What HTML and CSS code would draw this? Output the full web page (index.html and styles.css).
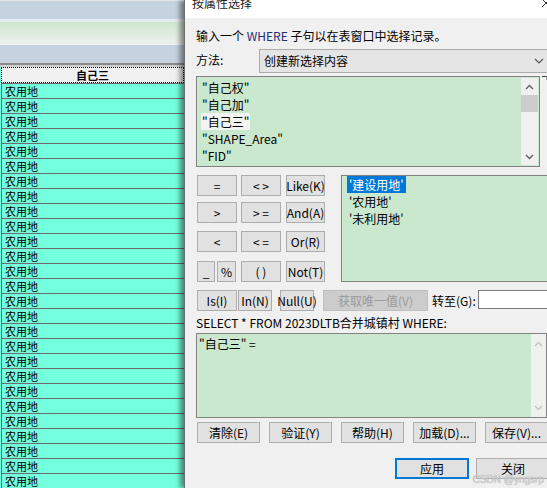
FILE: index.html
```html
<!DOCTYPE html>
<html lang="zh">
<head>
<meta charset="utf-8">
<title>按属性选择</title>
<link rel="stylesheet" href="styles.css">
</head>
<body>
<div class="screen">
  <div class="table-pane">
    <div class="band band-top"></div>
    <div class="band band-blue"></div>
    <div class="band band-light"></div>
    <div class="band band-green"></div>
    <div class="band band-blue"></div>
    <div class="sep"></div>
    <div class="col-header">自己三</div>
    <div class="rows">
      <div class="row">农用地</div><div class="row">农用地</div><div class="row">农用地</div>
      <div class="row">农用地</div><div class="row">农用地</div><div class="row">农用地</div>
      <div class="row">农用地</div><div class="row">农用地</div><div class="row">农用地</div>
      <div class="row">农用地</div><div class="row">农用地</div><div class="row">农用地</div>
      <div class="row">农用地</div><div class="row">农用地</div><div class="row">农用地</div>
      <div class="row">农用地</div><div class="row">农用地</div><div class="row">农用地</div>
      <div class="row">农用地</div><div class="row">农用地</div><div class="row">农用地</div>
      <div class="row">农用地</div><div class="row">农用地</div><div class="row">农用地</div>
      <div class="row">农用地</div><div class="row">农用地</div><div class="row">农用地</div>
    </div>
  </div>

  <div class="dialog">
    <div class="titlebar">
      <span class="title">按属性选择</span>
      <svg class="close" width="10" height="10" viewBox="0 0 10 10"><path d="M1 0 L9 8 M9 0 L1 8" stroke="#333" stroke-width="1" fill="none"/></svg>
    </div>
    <div class="body">
      <div class="intro">输入一个 <span class="blue">WHERE</span> 子句以在表窗口中选择记录。</div>
      <div class="method">
        <span class="method-label">方法:</span>
        <div class="combo">
          <span>创建新选择内容</span>
          <svg width="10" height="6" viewBox="0 0 10 6"><path d="M1 1 L5 5 L9 1" stroke="#555" stroke-width="1.2" fill="none"/></svg>
        </div>
      </div>

      <div class="fields-row">
        <div class="fields">
          <div class="fields-items">
            <div class="fitem">"自己权"</div>
            <div class="fitem">"自己加"</div>
            <div class="fitem sel">"自己三"</div>
            <div class="fitem">"SHAPE_Area"</div>
            <div class="fitem">"FID"</div>
          </div>
          <div class="vscroll">
            <div class="arrow"><svg width="9" height="6" viewBox="0 0 9 6"><path d="M1 5 L4.5 1.5 L8 5" stroke="#606060" stroke-width="1.4" fill="none"/></svg></div>
            <div class="thumb"></div>
            <div class="track"></div>
            <div class="arrow"><svg width="9" height="6" viewBox="0 0 9 6"><path d="M1 1 L4.5 4.5 L8 1" stroke="#606060" stroke-width="1.4" fill="none"/></svg></div>
          </div>
        </div>
        <div class="tick"></div>
      </div>

      <div class="ops-area">
        <div class="ops">
          <div class="ops-row r1">
            <div class="btn w40">=</div><div class="btn w40 g4">&lt; &gt;</div><div class="btn w39 g5">Like(K)</div>
          </div>
          <div class="ops-row r2">
            <div class="btn w40">&gt;</div><div class="btn w40 g4">&gt; =</div><div class="btn w39 g5">And(A)</div>
          </div>
          <div class="ops-row r3">
            <div class="btn w40">&lt;</div><div class="btn w40 g4">&lt; =</div><div class="btn w39 g5">Or(R)</div>
          </div>
          <div class="ops-row r4">
            <div class="btn w18">_</div><div class="btn w19 g2">%</div><div class="btn w40 g5">( )</div><div class="btn w39 g5">Not(T)</div>
          </div>
        </div>
        <div class="values">
          <div class="vitem"><span class="hl">'建设用地'</span></div>
          <div class="vitem">'农用地'</div>
          <div class="vitem">'未利用地'</div>
        </div>
      </div>

      <div class="tools">
        <div class="btn w40">Is(I)</div>
        <div class="btn w34 g1">In(N)</div>
        <div class="btn w34 g8">Null(U)</div>
        <div class="btn disabled g9">获取唯一值(V)</div>
        <span class="goto">转至(G):</span>
        <div class="goto-input"></div>
      </div>

      <div class="sql">SELECT * FROM 2023DLTB合并城镇村 WHERE:</div>

      <div class="expr">
        <div class="expr-text">"自己三" =</div>
        <div class="expr-scroll">
          <svg width="9" height="6" viewBox="0 0 9 6"><path d="M1 5 L4.5 1.5 L8 5" stroke="#c2c2c2" stroke-width="1.4" fill="none"/></svg>
          <svg width="9" height="6" viewBox="0 0 9 6"><path d="M1 1 L4.5 4.5 L8 1" stroke="#c2c2c2" stroke-width="1.4" fill="none"/></svg>
        </div>
      </div>

      <div class="bottom">
        <div class="btn w63">清除(E)</div>
        <div class="btn w63">验证(Y)</div>
        <div class="btn w63">帮助(H)</div>
        <div class="btn w63">加载(D)...</div>
        <div class="btn w63">保存(V)...</div>
      </div>

      <div class="actions">
        <div class="btn w74 default">应用</div>
        <div class="btn w74">关闭</div>
      </div>
    </div>
    <div class="watermark">CSDN @yngsrp</div>
  </div>
</div>
</body>
</html>
```

FILE: styles.css
```css
* { box-sizing: border-box; }
html, body { margin: 0; padding: 0; }
body {
  width: 547px;
  height: 488px;
  overflow: hidden;
  font-family: "Noto Sans CJK SC", "Noto Sans", sans-serif;
  font-size: 12px;
  color: #000;
  background: #f0f0f0;
}
.screen { display: flex; width: 547px; height: 488px; overflow: hidden; }

/* left attribute table */
.table-pane { width: 184px; flex: none; display: flex; flex-direction: column; background: #74ffde; }
.band-top { height: 1px; background: #e2e7ee; }
.band-blue { height: 21px; background: #c5d3e0; }
.band-light { height: 3px; background: #e6e9ee; }
.band-green { height: 26px; background: linear-gradient(#cde7cd, #eff0ef); }
.sep { height: 4px; border-top: 2px solid #8c8c8c; background: #d0d0d0; }
.col-header {
  height: 16px;
  margin-left: 1px;
  background: #f0f0f0;
  border: 1px dotted #000;
  text-align: center;
  line-height: 14px;
  font-size: 11px;
  font-weight: bold;
}
.rows { display: flex; flex-direction: column; }
.row {
  height: 15px;
  flex: none;
  margin-left: 1px;
  border-top: 1px solid #6c6c6c;
  border-left: 1px solid #6c6c6c;
  padding-left: 3px;
  font-size: 11px;
  line-height: 14px;
  overflow: hidden;
}

/* dialog */
.dialog {
  flex: none;
  width: 363px;
  position: relative;
  z-index: 1;
  border-left: 1px solid #6e6e6e;
  box-shadow: -4px 0 5px rgba(0, 0, 0, 0.45);
  background: #f0f0f0;
  overflow: hidden;
}
.titlebar {
  height: 18px;
  background: #fff;
  display: flex;
  justify-content: space-between;
  align-items: flex-start;
  padding-left: 7px;
  overflow: hidden;
}
.title { line-height: 12px; margin-top: -3px; color: #222; }
.close { margin-top: -1px; margin-right: -4px; }

.body { padding-left: 11px; }
.intro { margin-top: 10px; line-height: 16px; }
.blue { color: #1e2f78; }

.method { margin-top: 5px; display: flex; height: 24px; align-items: center; }
.method-label { width: 63px; flex: none; line-height: 20px; margin-top: -2px; }
.combo {
  width: 291px;
  flex: none;
  height: 24px;
  background: #e5e5e5;
  border: 1px solid #acacac;
  display: flex;
  align-items: center;
  justify-content: space-between;
  padding: 0 5px 0 4px;
  line-height: 20px;
}

.fields-row { margin-top: 3px; display: flex; align-items: flex-start; }
.fields {
  width: 344px;
  height: 91px;
  border: 1px solid #828282;
  background: #cae8cd;
  display: flex;
}
.fields-items { flex: 1; padding: 2px 0 0 5px; }
.fitem { height: 17px; line-height: 17px; }
.fitem.sel { display: inline-block; background: #f1f4f1; padding: 0 1px; margin-left: -1px; }
.vscroll {
  width: 17px;
  margin: 1px 1px 1px 0;
  background: #f0f0f0;
  display: flex;
  flex-direction: column;
}
.arrow { height: 17px; display: flex; align-items: center; justify-content: center; }
.thumb { height: 17px; background: #cdcdcd; }
.track { flex: 1; }
.tick { width: 5px; height: 4px; margin-left: 2px; border-top: 1px solid #444; border-right: 1px solid #999; }

.ops-area { margin-top: 8px; display: flex; height: 107px; }
.ops { width: 129px; flex: none; padding-left: 1px; display: flex; flex-direction: column; }
.ops-row { display: flex; height: 21px; }
.r2 { margin-top: 6px; }
.r3 { margin-top: 8px; }
.r4 { margin-top: 9px; }

.btn {
  height: 21px;
  flex: none;
  background: #e1e1e1;
  border: 1px solid #adadad;
  display: flex;
  align-items: center;
  justify-content: center;
  line-height: 19px;
  white-space: nowrap;
}
.w18 { width: 18px; }
.w19 { width: 19px; }
.w34 { width: 34px; }
.w39 { width: 39px; }
.w40 { width: 40px; }
.w63 { width: 63px; }
.w74 { width: 74px; }
.g1 { margin-left: 1px; }
.g2 { margin-left: 2px; }
.g4 { margin-left: 4px; }
.g5 { margin-left: 5px; }
.g8 { margin-left: 8px; }
.g9 { margin-left: 9px; }

.values {
  margin-left: 16px;
  width: 215px;
  flex: none;
  height: 107px;
  border: 1px solid #828282;
  background: #cae8cd;
  padding: 0 0 0 5px;
}
.vitem { height: 17px; line-height: 17px; padding-left: 2px; }
.hl { display: inline-block; background: #0078d7; color: #fff; padding: 0 2px; margin-left: -2px; }

.tools { margin-top: 8px; display: flex; align-items: center; padding-left: 1px; height: 21px; }
.btn.disabled { width: 105px; background: #cccccc; border-color: #bfbfbf; color: #9a9a9a; }
.goto { margin-left: 4px; width: 46px; flex: none; }
.goto-input { width: 80px; flex: none; height: 19px; align-self: flex-start; background: #fff; border: 1px solid #7a7a7a; }

.sql { margin-top: 5px; line-height: 14px; }

.expr {
  margin-top: 3px;
  width: 351px;
  height: 85px;
  border: 1px solid #828282;
  background: #cae8cd;
  display: flex;
}
.expr-text { flex: 1; padding: 2px 0 0 2px; line-height: 16px; }
.expr-scroll {
  width: 15px;
  background: #f0f0f0;
  display: flex;
  flex-direction: column;
  justify-content: space-between;
  align-items: center;
  padding: 7px 0 6px;
}

.bottom { margin-top: 4px; display: flex; gap: 9px; padding-left: 1px; }
.actions { margin-top: 15px; display: flex; gap: 7px; padding-left: 199px; }
.btn.default { border: 2px solid #0078d7; }

.watermark {
  position: absolute;
  right: 3px;
  bottom: 3px;
  font-family: "Liberation Sans", sans-serif;
  font-size: 10px;
  color: #d4d4d4;
  text-shadow: 0 0 1px #9a9a9a;
}
```
